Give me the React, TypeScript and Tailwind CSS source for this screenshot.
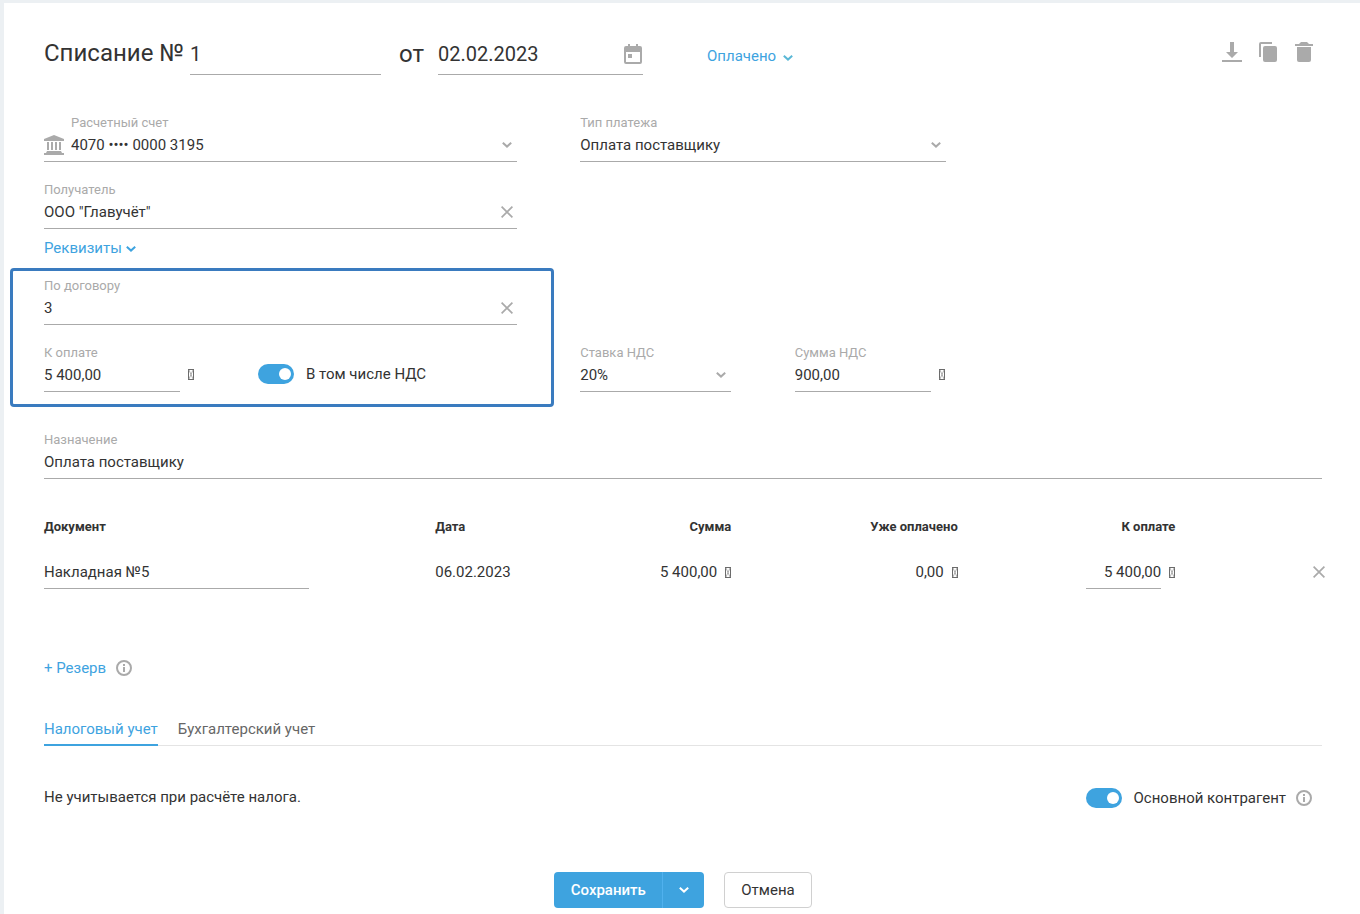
import React, { useState } from "react";

import clsx from "clsx";

const inputLine =
  "w-full border-b border-[#aaaaaa] bg-transparent outline-none focus:border-[#3ea3df]";

const Chevron = ({ className }: { className?: string }) => (
  <svg
    width="10"
    height="6"
    viewBox="0 0 10 6"
    fill="none"
    stroke="currentColor"
    strokeWidth="2"
    className={clsx("shrink-0", className)}
  >
    <path d="M0.8 0.8 5 4.6 9.2 0.8" />
  </svg>
);

const Cross = () => (
  <svg
    width="12"
    height="12"
    viewBox="0 0 12 12"
    fill="none"
    stroke="currentColor"
    strokeWidth="1.7"
  >
    <path d="M0.6 0.6 11.4 11.4M11.4 0.6 0.6 11.4" />
  </svg>
);

const CurrencySign = () => (
  <svg
    width="6"
    height="11"
    viewBox="0 0 6 11"
    fill="none"
    className="shrink-0"
    role="img"
    aria-label="руб."
  >
    <rect x="0.5" y="0.5" width="5" height="10" stroke="#6b6b6b" />
    <path d="M1 1 5 10M5 1 1 10" stroke="#a5a5a5" strokeWidth="0.9" />
  </svg>
);

const InfoIcon = () => (
  <svg width="16" height="16" viewBox="0 0 16 16" fill="#aaaaaa">
    <circle cx="8" cy="8" r="7" fill="none" stroke="#aaaaaa" strokeWidth="2" />
    <rect x="7" y="4" width="2" height="2" />
    <rect x="7" y="7" width="2" height="5" />
  </svg>
);

const BankIcon = () => (
  <svg
    width="20"
    height="20"
    viewBox="0 0 20 20"
    fill="#aaaaaa"
    className="shrink-0"
  >
    <path d="M10 0 20 4v2H0V4z" />
    <path d="M3 7h2v8H3zM7 7h2v8H7zM11 7h2v8h-2zM15 7h2v8h-2z" />
    <path d="M3 16h14l1 2h2v2H0v-2h2z" />
  </svg>
);

const CalendarIcon = () => (
  <svg width="18" height="20" viewBox="0 0 18 20" fill="currentColor">
    <path
      fillRule="evenodd"
      d="M4 0h2v2h6V0h2v2h2a2 2 0 0 1 2 2v14a2 2 0 0 1-2 2H2a2 2 0 0 1-2-2V4a2 2 0 0 1 2-2h2zM2 8v10h14V8z"
    />
    <rect x="4" y="10" width="4" height="4" />
  </svg>
);

const DownloadIcon = () => (
  <svg width="20" height="20" viewBox="0 0 20 20" fill="currentColor">
    <path d="M8 0h4v10h4l-6 6-6-6h4zM0 18h20v2H0z" />
  </svg>
);

const CopyIcon = () => (
  <svg width="20" height="20" viewBox="0 0 20 20" fill="currentColor">
    <path d="M14 0H3a2 2 0 0 0-2 2v13h2V2h11z" />
    <rect x="5" y="4" width="14" height="16" rx="2" />
  </svg>
);

const TrashIcon = () => (
  <svg width="20" height="20" viewBox="0 0 20 20" fill="currentColor">
    <path d="M1 2h4l2-2h6l2 2h4v2H1z" />
    <path d="M3 5h14v13a2 2 0 0 1-2 2H5a2 2 0 0 1-2-2z" />
  </svg>
);

type FieldProps = {
  id: string;
  label: string;
  className?: string;
  children: React.ReactNode;
};

const Field = ({ id, label, className, children }: FieldProps) => (
  <div className={className}>
    <label htmlFor={id} className="block text-[13px] leading-4 text-[#aaaaaa]">
      {label}
    </label>
    {children}
  </div>
);

type SelectProps = { id: string; options: string[] };

const Select = ({ id, options }: SelectProps) => (
  <div className="relative">
    <select id={id} className={clsx(inputLine, "h-[31px] appearance-none pr-8 pb-0.5")}>
      {options.map((option) => (
        <option key={option}>{option}</option>
      ))}
    </select>
    <Chevron className="pointer-events-none absolute top-[11px] right-[5px] text-[#aaaaaa]" />
  </div>
);

const ClearableInput = ({ id, initial }: { id: string; initial: string }) => {
  const [value, setValue] = useState(initial);

  return (
    <div className="relative">
      <input
        id={id}
        value={value}
        onChange={(e) => setValue(e.target.value)}
        className={clsx(inputLine, "h-[31px] pr-8 pb-0.5")}
      />
      <button
        type="button"
        aria-label="Очистить"
        onClick={() => setValue("")}
        className="absolute top-2 right-1 text-[#aaaaaa]"
      >
        <Cross />
      </button>
    </div>
  );
};

const Toggle = ({ label }: { label: string }) => {
  const [checked, setChecked] = useState(true);

  return (
    <label className="flex cursor-pointer items-center gap-3 whitespace-nowrap">
      <input
        type="checkbox"
        checked={checked}
        onChange={(e) => setChecked(e.target.checked)}
        className="peer sr-only"
      />
      <span
        className={clsx(
          "flex h-5 w-9 items-center rounded-full px-[3px]",
          checked ? "justify-end bg-[#3ea3df]" : "justify-start bg-[#aaaaaa]",
        )}
      >
        <span className="size-3 rounded-full bg-white" />
      </span>
      {label}
    </label>
  );
};

const tabs = ["Налоговый учет", "Бухгалтерский учет"];

const documents = [
  { name: "Накладная №5", date: "06.02.2023", sum: "5 400,00", paid: "0,00", due: "5 400,00" },
];

const App = () => {
  const [activeTab, setActiveTab] = useState(tabs[0]);

  return (
    <div className="flex min-h-screen flex-col bg-[#ecf0f3] pt-[3px] pl-1 font-[Roboto,sans-serif] text-[15px] leading-5 text-[#333333]">
      <main className="flex-1 bg-white pt-8 pr-[38px] pb-1 pl-10">
        <header className="flex h-10 items-center">
          <h1 className="pb-1 text-[24px] leading-8 whitespace-nowrap">
            <label htmlFor="number">Списание №</label>
          </h1>
          <input
            id="number"
            defaultValue="1"
            className="ml-1.5 h-10 w-[191px] border-b border-[#aaaaaa] pb-0.5 text-[20px] outline-none"
          />
          <label htmlFor="date" className="ml-[18px] pb-0.5 text-[24px] leading-8">
            от
          </label>
          <div className="relative ml-3.5 w-[205px]">
            <input
              id="date"
              defaultValue="02.02.2023"
              className="h-10 w-full border-b border-[#aaaaaa] pr-8 pb-0.5 text-[20px] outline-none"
            />
            <button
              type="button"
              aria-label="Выбрать дату"
              className="absolute top-[9px] right-px text-[#aaaaaa]"
            >
              <CalendarIcon />
            </button>
          </div>
          <button
            type="button"
            className="ml-16 flex items-center gap-[7px] pt-0.5 text-[#3ea3df]"
          >
            Оплачено
            <Chevron className="mt-1 text-[#5bb8d6]" />
          </button>
          <div className="mr-2 mb-1.5 ml-auto flex gap-4 text-[#aaaaaa]">
            <button type="button" aria-label="Скачать">
              <DownloadIcon />
            </button>
            <button type="button" aria-label="Копировать">
              <CopyIcon />
            </button>
            <button type="button" aria-label="Удалить">
              <TrashIcon />
            </button>
          </div>
        </header>

        <div className="mt-10 -mr-[9px] grid grid-cols-12">
          <div className="col-span-5 pr-[63px]">
            <div className="flex items-end border-b border-[#aaaaaa]">
              <div className="mr-[7px] pb-1.5">
                <BankIcon />
              </div>
              <Field id="account" label="Расчетный счет" className="-mb-px flex-1">
                <Select id="account" options={["4070 •••• 0000 3195"]} />
              </Field>
            </div>
          </div>
          <Field id="type" label="Тип платежа" className="col-span-4 pr-[63px]">
            <Select id="type" options={["Оплата поставщику"]} />
          </Field>

          <div className="col-span-5 mt-5 pr-[63px]">
            <Field id="recipient" label="Получатель">
              <ClearableInput id="recipient" initial={'ООО "Главучёт"'} />
            </Field>
            <button
              type="button"
              className="mt-[9px] flex items-center gap-1 text-[#3ea3df]"
            >
              Реквизиты
              <Chevron className="mt-0.5" />
            </button>
          </div>
        </div>

        <div className="mt-2.5 -mr-[9px] grid grid-cols-12 items-end">
          <section className="col-span-5 mr-[26px] -ml-[34px] rounded-[4px] border-3 border-[#3a7bbf] pt-[7px] pr-[34px] pb-3 pl-[31px]">
            <Field id="contract" label="По договору">
              <ClearableInput id="contract" initial="3" />
            </Field>
            <div className="mt-5 flex">
              <div className="flex w-[150px] items-end gap-2">
                <Field id="amount" label="К оплате" className="flex-1">
                  <input
                    id="amount"
                    defaultValue="5 400,00"
                    className={clsx(inputLine, "h-[31px] pb-0.5")}
                  />
                </Field>
                <div className="pb-3">
                  <CurrencySign />
                </div>
              </div>
              <div className="ml-16 pt-[19px]">
                <Toggle label="В том числе НДС" />
              </div>
            </div>
          </section>

          <Field id="rate" label="Ставка НДС" className="col-span-2 pr-16 pb-[15px]">
            <Select id="rate" options={["20%", "10%", "0%"]} />
          </Field>
          <div className="col-span-2 flex items-end gap-2 pr-16 pb-[15px]">
            <Field id="vat" label="Сумма НДС" className="flex-1">
              <input
                id="vat"
                defaultValue="900,00"
                className={clsx(inputLine, "h-[31px] pb-0.5")}
              />
            </Field>
            <div className="pb-3">
              <CurrencySign />
            </div>
          </div>
        </div>

        <Field id="purpose" label="Назначение" className="mt-[25px]">
          <input
            id="purpose"
            defaultValue="Оплата поставщику"
            className={clsx(inputLine, "h-[31px] pb-0.5")}
          />
        </Field>

        <div className="mt-10 -mr-[9px]">
          <table className="w-full table-fixed">
            <colgroup>
              <col className="w-[30.4%]" />
              <col className="w-[15%]" />
              <col className="w-[8%]" />
              <col className="w-[17.6%]" />
              <col className="w-[16.9%]" />
              <col />
            </colgroup>
            <thead>
              <tr className="text-[13px] leading-4 whitespace-nowrap">
                <th className="p-0 text-left font-bold">Документ</th>
                <th className="p-0 text-left font-bold">Дата</th>
                <th className="p-0 text-right font-bold">Сумма</th>
                <th className="p-0 text-right font-bold">Уже оплачено</th>
                <th className="p-0 text-right font-bold">К оплате</th>
                <th aria-label="Действия" />
              </tr>
            </thead>
            <tbody>
              {documents.map((doc) => (
                <tr key={doc.name}>
                  <td className="p-0 pt-[23px] pr-[126px]">
                    <input
                      aria-label="Документ"
                      defaultValue={doc.name}
                      className={clsx(inputLine, "block h-[31px] pb-0.5")}
                    />
                  </td>
                  <td className="p-0 pt-5">{doc.date}</td>
                  <td className="p-0 pt-5">
                    <div className="flex items-center justify-end gap-2 whitespace-nowrap">
                      {doc.sum}
                      <CurrencySign />
                    </div>
                  </td>
                  <td className="p-0 pt-5">
                    <div className="flex items-center justify-end gap-2">
                      {doc.paid}
                      <CurrencySign />
                    </div>
                  </td>
                  <td className="p-0 pt-[23px]">
                    <div className="flex items-center justify-end gap-2">
                      <div className="w-[75px]">
                        <input
                          aria-label="К оплате"
                          defaultValue={doc.due}
                          className={clsx(inputLine, "block h-[31px] pb-0.5 text-right")}
                        />
                      </div>
                      <div className="pb-0.5">
                        <CurrencySign />
                      </div>
                    </div>
                  </td>
                  <td className="p-0 pt-5 pr-1.5">
                    <button
                      type="button"
                      aria-label="Удалить документ"
                      className="ml-auto block text-[#aaaaaa]"
                    >
                      <Cross />
                    </button>
                  </td>
                </tr>
              ))}
            </tbody>
          </table>
        </div>

        <div className="mt-[67px] flex h-6 items-center gap-2.5">
          <button type="button" className="text-[#3ea3df]">
            + Резерв
          </button>
          <InfoIcon />
        </div>

        <div role="tablist" className="mt-[37px] flex h-[29px] gap-5 border-b border-[#e4e4e4]">
          {tabs.map((tab) => (
            <button
              key={tab}
              type="button"
              role="tab"
              aria-selected={tab === activeTab}
              onClick={() => setActiveTab(tab)}
              className={clsx(
                "-mb-px border-b-2 pb-1",
                tab === activeTab
                  ? "border-[#3ea3df] text-[#3ea3df]"
                  : "border-transparent text-[#666666]",
              )}
            >
              {tab}
            </button>
          ))}
        </div>

        <div className="mt-[41px] flex items-center justify-between">
          <p className="pb-0.5">Не учитывается при расчёте налога.</p>
          <div className="mr-2.5 flex items-center gap-2.5">
            <Toggle label="Основной контрагент" />
            <InfoIcon />
          </div>
        </div>

        <div className="mt-[63px] flex justify-center gap-5">
          <div className="flex h-9 overflow-hidden rounded-[4px] bg-[#3ea3df] font-medium text-white">
            <button type="button" className="w-[108px] text-center">
              Сохранить
            </button>
            <button
              type="button"
              aria-label="Другие действия"
              className="flex w-[42px] items-center justify-center border-l border-[#50b1ee]"
            >
              <Chevron />
            </button>
          </div>
          <button type="button" className="h-9 rounded-[4px] border border-[#d0d0d0] px-4">
            Отмена
          </button>
        </div>
      </main>
    </div>
  );
};

export default App;
